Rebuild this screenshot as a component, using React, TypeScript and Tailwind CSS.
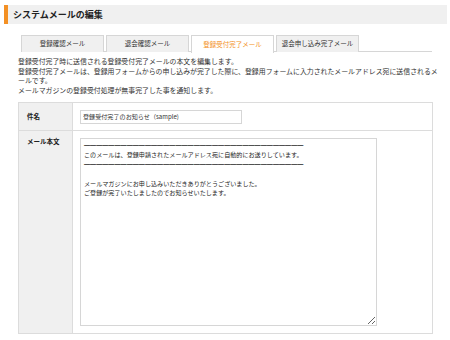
import React from "react";

const rule = "━".repeat(36);
const body = `${rule}
このメールは、登録申請されたメールアドレス宛に自動的にお送りしています。
${rule}

メールマガジンにお申し込みいただきありがとうございました。
ご登録が完了いたしましたのでお知らせいたします。`;

const tabs = ["登録確認メール", "退会確認メール", "登録受付完了メール", "退会申し込み完了メール"];

export default function App() {
  return (
    <div className="w-[450px] h-[340px] bg-white pt-[5px] text-[#333] font-['Noto_Sans_CJK_JP',sans-serif] overflow-hidden">
      <div className="ml-[4px] mr-[3px] h-[19px] bg-[#f0f0f0] border-l-4 border-[#f39024] flex items-center pl-[5px] text-[9px] font-bold text-[#222]">
        システムメールの編集
      </div>

      <div className="mt-[11px] ml-[21px] w-[411px] h-[17px] flex gap-[2px] border-b border-[#d6d6d6]">
        {tabs.map((t, i) =>
          i === 2 ? (
            <div
              key={t}
              className="w-[83px] h-[18px] flex items-center justify-center bg-white border border-b-0 border-[#d6d6d6] text-[6.5px] text-[#f39024]"
            >
              {t}
            </div>
          ) : (
            <div
              key={t}
              className="w-[83px] h-[17px] flex items-center justify-center bg-[#f0f0f0] border border-b-0 border-[#d6d6d6] text-[6.5px] text-[#333]"
            >
              {t}
            </div>
          )
        )}
      </div>

      <div className="mt-[5px] ml-[18px] w-[420px] text-[6.9px] leading-[9.5px]">
        <p>登録受付完了時に送信される登録受付完了メールの本文を編集します。</p>
        <p>登録受付完了メールは、登録用フォームからの申し込みが完了した際に、登録用フォームに入力されたメールアドレス宛に送信されるメールです。</p>
        <p>メールマガジンの登録受付処理が無事完了した事を通知します。</p>
      </div>

      <table className="mt-[7px] ml-[18px] w-[415px] border-collapse border border-[#dcdcdc]">
        <tbody>
          <tr className="h-[28px]">
            <th className="w-[54px] bg-[#f0f0f0] border border-[#dcdcdc] text-left align-middle pl-[8px] text-[6.5px] font-bold text-[#222]">
              件名
            </th>
            <td className="border border-[#dcdcdc] pl-[7px] align-middle">
              <input
                readOnly
                value="登録受付完了のお知らせ（sample)"
                className="block w-[162px] h-[14px] border border-[#d6d6d6] px-[2px] text-[6.1px] text-[#333] outline-none"
              />
            </td>
          </tr>
          <tr className="h-[202px]">
            <th className="w-[54px] bg-[#f0f0f0] border border-[#dcdcdc] text-left align-top pl-[8px] pt-[6px] text-[6.5px] leading-[9.5px] font-bold text-[#222]">
              メール本文
            </th>
            <td className="border border-[#dcdcdc] pl-[7px] pt-[7px] pb-[7px] align-top">
              <textarea
                readOnly
                value={body}
                className="block w-[297px] h-[188px] border border-[#d6d6d6] px-[3px] py-[2px] text-[6.1px] leading-[9.4px] text-[#222] outline-none overflow-hidden"
              />
            </td>
          </tr>
        </tbody>
      </table>
    </div>
  );
}
